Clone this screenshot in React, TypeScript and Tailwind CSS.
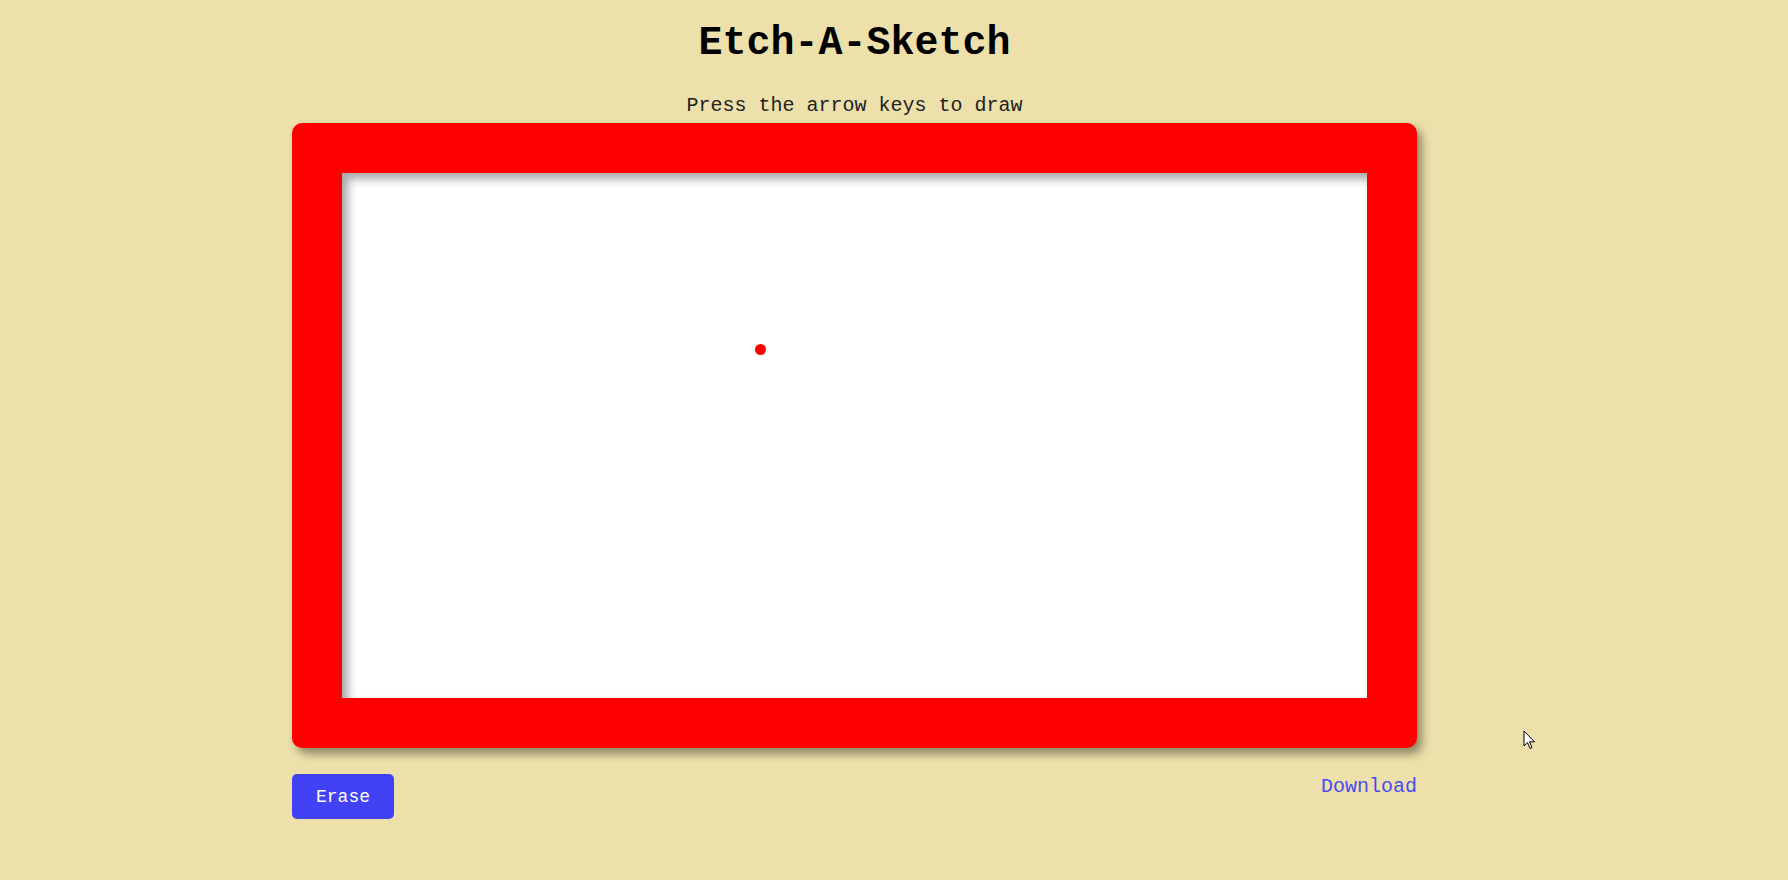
export default function App() {
  return (
    <div className="min-h-[880px] w-full bg-[#ede0ab] relative" style={{ fontFamily: '"Liberation Mono", "Courier New", monospace' }}>
      <div className="ml-[292px] w-[1125px]">
        {/* Heading */}
        <div className="text-center pt-[24px]">
          <h1 className="text-[40px] leading-none font-bold text-black">Etch-A-Sketch</h1>
          <p className="mt-[32px] text-[20px] leading-none text-[#222]">Press the arrow keys to draw</p>
        </div>

        {/* Frame */}
        <div className="mt-[7px] bg-[#ff0000] rounded-[10px] p-[50px] shadow-[5px_6px_10px_rgba(0,0,0,0.4)]">
          <div className="relative h-[525px] bg-white shadow-[inset_6px_6px_10px_rgba(0,0,0,0.35)]">
            <div className="absolute left-[413px] top-[171px] w-[11px] h-[11px] rounded-full bg-[#ff0000]" />
          </div>
        </div>

        {/* Controls */}
        <div className="mt-[26px] flex items-start justify-between">
          <button className="w-[102px] h-[45px] rounded-[5px] bg-[#4242f5] text-white text-[18px] leading-none">
            Erase
          </button>
          <a href="#" className="mt-[3px] text-[20px] leading-none text-[#4a4af0]">
            Download
          </a>
        </div>
      </div>

      {/* mouse pointer */}
      <svg className="absolute left-[1523px] top-[730px]" width="13" height="20" viewBox="0 0 13 20">
        <path d="M1 1 L1 16 L4.5 12.5 L7 18.5 L9 17.6 L6.6 11.8 L11.5 11.8 Z" fill="white" stroke="black" strokeWidth="1" strokeLinejoin="round" />
      </svg>
    </div>
  );
}
